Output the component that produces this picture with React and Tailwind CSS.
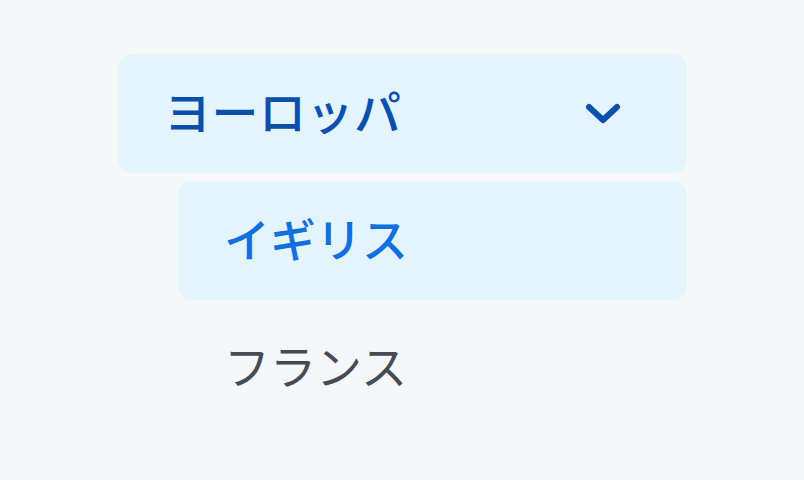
import React from "react";

export default function App() {
  const font = { fontFamily: '"Noto Sans CJK JP", "Noto Sans", sans-serif' };
  return (
    <div className="w-[804px] h-[480px] bg-[#f6f7f9] overflow-hidden" style={font}>
      <div className="ml-[118px] mt-[54px] w-[569px] flex flex-col gap-[8px]">
        <div className="h-[119px] rounded-[14px] bg-[#e3f4fd] flex items-center justify-between pl-[46px] pr-[66px]">
          <span className="text-[47px] font-medium text-[#0b4fad] leading-none pb-[8px] tracking-[0.5px]">ヨーロッパ</span>
          <svg width="36" height="24" viewBox="0 0 36 24" fill="none">
            <path d="M4 5 L18 18 L32 5" stroke="#0b4fad" strokeWidth="6" strokeLinecap="round" strokeLinejoin="round" />
          </svg>
        </div>
        <div className="ml-[60px] h-[119px] rounded-[14px] bg-[#e3f4fd] flex items-center pl-[46px]">
          <span className="text-[46px] font-medium text-[#116fdf] leading-none pb-[8px]">イギリス</span>
        </div>
        <div className="ml-[60px] h-[119px] flex items-center pl-[46px]">
          <span className="text-[46px] font-normal text-[#464c55] leading-none pb-[8px]">フランス</span>
        </div>
      </div>
    </div>
  );
}
